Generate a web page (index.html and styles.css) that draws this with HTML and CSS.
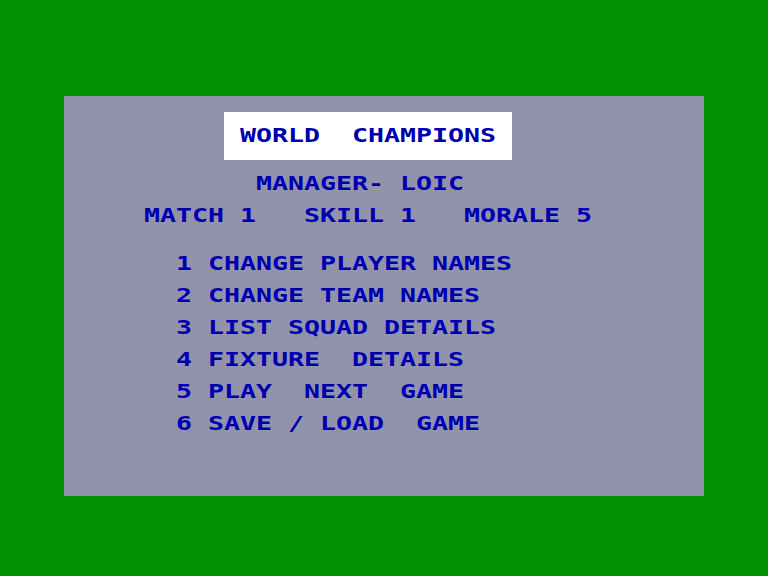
FILE: index.html
```html
<!DOCTYPE html>
<html lang="en">
<head>
    <meta charset="UTF-8">
    <title>World Champions</title>
    <link rel="stylesheet" href="styles.css">
</head>
<body>

    <div class="screen">
        <div class="panel">
            <div class="title-box"><span class="txt">WORLD  CHAMPIONS</span></div>

            <div class="row manager"><span class="txt">MANAGER- LOIC</span></div>
            <div class="row stats"><span class="txt">MATCH 1   SKILL 1   MORALE 5</span></div>

            <div class="menu">
                <div class="row"><span class="txt">1 CHANGE PLAYER NAMES</span></div>
                <div class="row"><span class="txt">2 CHANGE TEAM NAMES</span></div>
                <div class="row"><span class="txt">3 LIST SQUAD DETAILS</span></div>
                <div class="row"><span class="txt">4 FIXTURE  DETAILS</span></div>
                <div class="row"><span class="txt">5 PLAY  NEXT  GAME</span></div>
                <div class="row"><span class="txt">6 SAVE / LOAD  GAME</span></div>
            </div>
        </div>
    </div>

</body>
</html>
```

FILE: styles.css
```css
body {
    margin: 0;
    background: #009000; /* border colour */
    font-family: "DejaVu Sans Mono", "Liberation Mono", monospace;
    font-weight: bold;
    font-size: 20px;
    color: #0000b0;
}
.screen {
    width: 768px;
    height: 576px;
    padding: 96px 64px;
    box-sizing: border-box;
}
.panel {
    width: 640px;
    height: 384px;
    background: #9292aa;
    padding-top: 16px;
}
/* each character cell is 16px wide, like the 8x8 font doubled */
.txt {
    display: inline-block;
    white-space: pre;
    transform: scaleX(1.329);
    transform-origin: left center;
}
.title-box {
    margin-left: 160px;
    width: 288px;
    height: 48px;
    line-height: 46px;
    background: #fff;
    padding-left: 16px;
    box-sizing: border-box;
}
.row {
    height: 32px;
    line-height: 30px;
}
.manager { margin-top: 8px; padding-left: 192px; }
.stats { padding-left: 80px; }
.menu { margin-top: 16px; padding-left: 112px; }
```
